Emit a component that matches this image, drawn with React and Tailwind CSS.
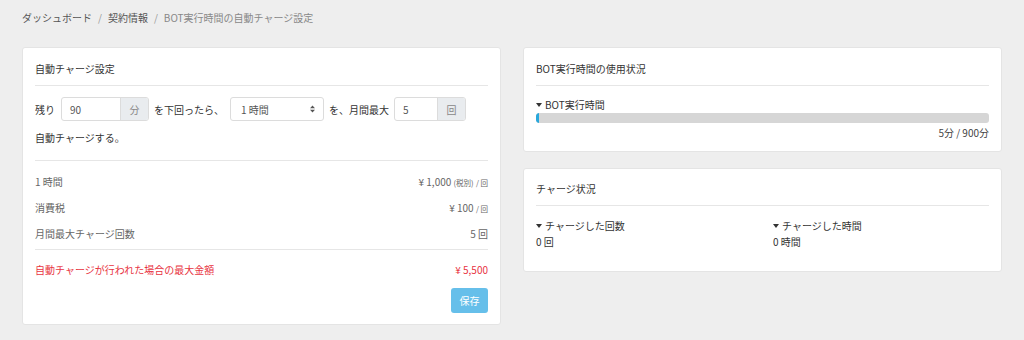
import React from "react";

const font = { fontFamily: '"Noto Sans CJK JP", "Noto Sans", sans-serif' };

function Caret() {
  return (
    <svg width="6" height="4" viewBox="0 0 6 4" className="inline-block mr-[3px] align-[2px]">
      <path d="M0 0 L6 0 L3 4 Z" fill="#333" />
    </svg>
  );
}

export default function App() {
  return (
    <div className="w-[1024px] h-[340px] bg-[#eeeeee] text-[10px] text-[#333] overflow-hidden" style={font}>
      <div className="h-[34px] flex items-center px-[22px] text-[10px]">
        <span className="text-[#555]">ダッシュボード</span>
        <span className="mx-[6px] text-[#999]">/</span>
        <span className="text-[#555]">契約情報</span>
        <span className="mx-[6px] text-[#999]">/</span>
        <span className="text-[#888]">BOT実行時間の自動チャージ設定</span>
      </div>
      <div className="grid grid-cols-2 gap-[22px] px-[22px] pt-[13px] items-start">
        {/* Left card */}
        <div className="bg-white rounded-[3px] border border-[#e4e4e4] px-[12px] pb-[11px]">
          <div className="pt-[14px] pb-[9px] leading-[14px] border-b border-[#e6e6e6]">自動チャージ設定</div>
          <div className="flex items-center mt-[11px] h-[24px] text-[#333]">
            <span>残り</span>
            <div className="flex h-[24px] w-[88px] ml-[6px] border border-[#dcdcdc] rounded-[3px] overflow-hidden">
              <div className="flex-1 flex items-center pl-[8px] text-[#555]">90</div>
              <div className="w-[28px] bg-[#e9ecef] border-l border-[#dcdcdc] flex items-center justify-center text-[#888]">分</div>
            </div>
            <span className="ml-[5px] w-[70px]">を下回ったら、</span>
            <div className="flex items-center justify-between h-[24px] w-[94px] ml-[6px] border border-[#dcdcdc] rounded-[3px] pl-[10px] pr-[8px] text-[#555]">
              <span>1 時間</span>
              <svg width="5" height="8" viewBox="0 0 5 8">
                <path d="M0 3.2 L5 3.2 L2.5 0.4 Z M0 4.8 L5 4.8 L2.5 7.6 Z" fill="#555" />
              </svg>
            </div>
            <span className="ml-[5px]">を、月間最大</span>
            <div className="flex h-[24px] w-[72px] ml-[5px] border border-[#dcdcdc] rounded-[3px] overflow-hidden">
              <div className="flex-1 flex items-center pl-[8px] text-[#555]">5</div>
              <div className="w-[28px] bg-[#e9ecef] border-l border-[#dcdcdc] flex items-center justify-center text-[#888]">回</div>
            </div>
          </div>
          <div className="mt-[10px] leading-[14px] pb-[15px] border-b border-[#e6e6e6]">自動チャージする。</div>
          <div className="pt-[7px] text-[#666]">
            <div className="flex justify-between items-center h-[26px]">
              <span>1 時間</span>
              <span>¥ 1,000 <span className="text-[7.5px]">(税別)</span> <span className="text-[7.5px]">/ 回</span></span>
            </div>
            <div className="flex justify-between items-center h-[26px]">
              <span>消費税</span>
              <span>¥ 100 <span className="text-[7.5px]">/ 回</span></span>
            </div>
            <div className="flex justify-between items-center h-[26px]">
              <span>月間最大チャージ回数</span>
              <span>5 回</span>
            </div>
          </div>
          <div className="border-b border-[#e6e6e6] mt-[3px]"></div>
          <div className="flex justify-between items-center leading-[14px] mt-[13px] text-[#e8343f]">
            <span>自動チャージが行われた場合の最大金額</span>
            <span>¥ 5,500</span>
          </div>
          <div className="flex justify-end mt-[11px]">
            <button className="h-[25px] w-[37px] rounded-[3px] bg-[#66bfea] text-white text-[10px]">保存</button>
          </div>
        </div>
        {/* Right column */}
        <div className="flex flex-col gap-[16px]">
          <div className="bg-white rounded-[3px] border border-[#e4e4e4] px-[12px] pb-[11px]">
            <div className="pt-[14px] pb-[9px] leading-[14px] border-b border-[#e6e6e6]">BOT実行時間の使用状況</div>
            <div className="mt-[12px] leading-[14px]"><Caret />BOT実行時間</div>
            <div className="h-[10px] mt-[1px] bg-[#d6d6d6] rounded-[3px] overflow-hidden">
              <div className="h-full bg-[#28a8dc] rounded-l-[3px]" style={{ width: "0.6%" }}></div>
            </div>
            <div className="text-right leading-[14px] mt-[3px] text-[#444]">5分 / 900分</div>
          </div>
          <div className="bg-white rounded-[3px] border border-[#e4e4e4] px-[12px] pb-[21px]">
            <div className="pt-[13px] pb-[9px] leading-[14px] border-b border-[#e6e6e6]">チャージ状況</div>
            <div className="grid grid-cols-[237px_1fr] mt-[12px] leading-[16px]">
              <div>
                <div><Caret />チャージした回数</div>
                <div>0 回</div>
              </div>
              <div>
                <div><Caret />チャージした時間</div>
                <div>0 時間</div>
              </div>
            </div>
          </div>
        </div>
      </div>
    </div>
  );
}
